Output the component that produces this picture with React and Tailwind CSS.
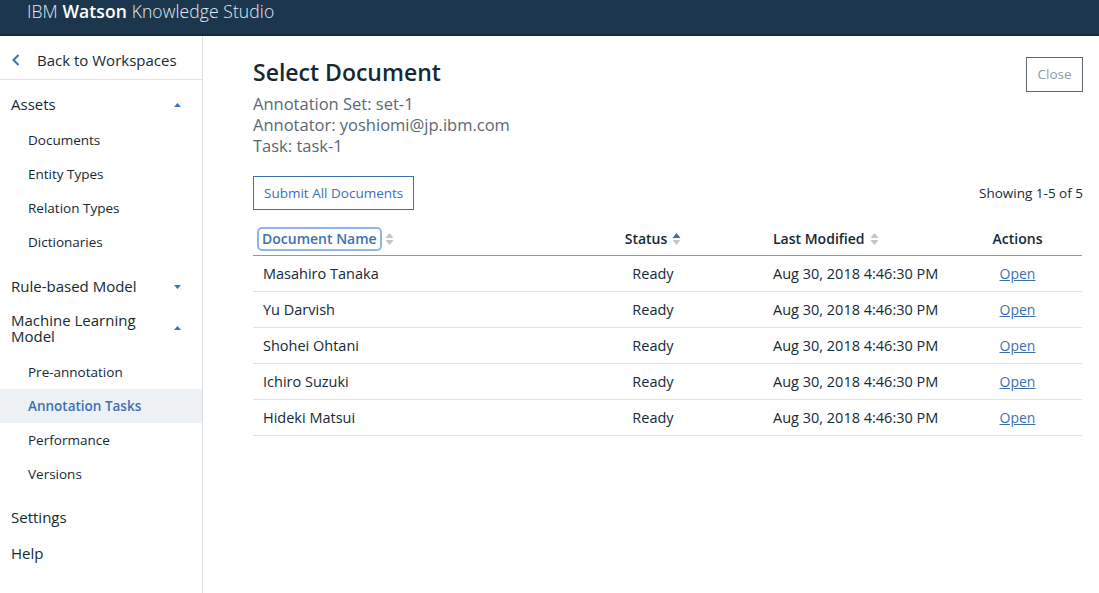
import React from 'react';

const rows = [
  { name: 'Masahiro Tanaka' },
  { name: 'Yu Darvish' },
  { name: 'Shohei Ohtani' },
  { name: 'Ichiro Suzuki' },
  { name: 'Hideki Matsui' },
];

function Caret({ up }) {
  return (
    <svg width="7" height="4" viewBox="0 0 7 4" className="fill-[#3d70b2]">
      {up ? <path d="M3.5 0 L7 4 L0 4 Z" /> : <path d="M0 0 L7 0 L3.5 4 Z" />}
    </svg>
  );
}

function SortIcon({ active }) {
  return (
    <svg width="9" height="14" viewBox="0 0 9 14" className="ml-[5px]">
      <path d="M4.5 1 L8.5 6 L0.5 6 Z" fill={active ? '#3d70b2' : '#c0c6cb'} />
      <path d="M0.5 8 L8.5 8 L4.5 13 Z" fill="#c0c6cb" />
    </svg>
  );
}

function NavGroup({ label, open, children }) {
  return (
    <div>
      <div className="flex items-center justify-between pl-[11px] pr-[21px] text-[15px] text-[#152935] leading-[17px]">
        <span>{label}</span>
        <Caret up={open} />
      </div>
      {children}
    </div>
  );
}

function SubItem({ label, active }) {
  return (
    <div
      className={
        'h-[34px] flex items-center pl-[28px] text-[13.5px] ' +
        (active ? 'bg-[#eef1f4] text-[#3d70b2] font-semibold' : 'text-[#152935]')
      }
    >
      {label}
    </div>
  );
}

export default function App() {
  return (
    <div className="w-[1099px] h-[593px] overflow-hidden bg-white flex flex-col font-['Open_Sans',sans-serif]">
      <header className="h-[36px] shrink-0 bg-[#1c374d] border-b-2 border-[#132a3c] flex items-center pl-[27px]">
        <span className="text-[17.5px] text-[#e6ecf1] font-light tracking-[0.1px] -mt-[12px]">
          IBM <span className="font-semibold text-white">Watson</span> Knowledge Studio
        </span>
      </header>

      <div className="flex flex-1 min-h-0">
        <aside className="w-[203px] shrink-0 border-r border-[#dfe3e6] flex flex-col">
          <div className="h-[44px] pt-[5px] flex items-center border-b border-[#dfe3e6] text-[15px] text-[#152935]">
            <svg width="8" height="12" viewBox="0 0 8 12" className="ml-[12px] mr-[17px]">
              <path d="M6.5 1 L1.5 6 L6.5 11" stroke="#3d70b2" strokeWidth="2" fill="none" />
            </svg>
            Back to Workspaces
          </div>

          <div className="pt-[16px]">
            <NavGroup label="Assets" open>
              <div className="pt-[10px] pb-[19px]">
                <SubItem label="Documents" />
                <SubItem label="Entity Types" />
                <SubItem label="Relation Types" />
                <SubItem label="Dictionaries" />
              </div>
            </NavGroup>
            <div className="pb-[17px]">
              <NavGroup label="Rule-based Model" open={false} />
            </div>
            <div className="flex items-center justify-between pl-[11px] pr-[21px] text-[15px] text-[#152935] leading-[16px]">
              <span>Machine Learning<br />Model</span>
              <Caret up />
            </div>
            <div className="pt-[11px] pb-[8px]">
              <SubItem label="Pre-annotation" />
              <SubItem label="Annotation Tasks" active />
              <SubItem label="Performance" />
              <SubItem label="Versions" />
            </div>
            <div className="pl-[11px] text-[15px] text-[#152935] h-[36px] flex items-center">Settings</div>
            <div className="pl-[11px] text-[15px] text-[#152935] h-[36px] flex items-center">Help</div>
          </div>
        </aside>

        <main className="flex-1 pl-[50px] pr-[16px] pt-[21px]">
          <div className="flex justify-between items-start">
            <div>
              <h1 className="text-[23px] font-semibold text-[#152935] leading-[30px]">Select Document</h1>
              <div className="mt-[6px] text-[16.5px] text-[#5a6872] leading-[21px]">
                <div>Annotation Set: set-1</div>
                <div>Annotator: yoshiomi@jp.ibm.com</div>
                <div>Task: task-1</div>
              </div>
            </div>
            <button className="w-[57px] h-[35px] border border-[#5a6872] text-[13.5px] text-[#8c9ba5]">
              Close
            </button>
          </div>

          <div className="flex justify-between items-center mt-[20px]">
            <button className="h-[34px] px-[10px] border border-[#3d70b2] text-[13.5px] text-[#3d70b2]">
              Submit All Documents
            </button>
            <span className="text-[13.5px] text-[#152935]">Showing 1-5 of 5</span>
          </div>

          <div className="mt-[12px] w-[829px]">
            <div className="grid grid-cols-[350px_100px_250px_1fr] h-[34px] items-center border-b border-[#8c9ba5] text-[14px] font-semibold text-[#152935]">
              <div className="pl-[6px] flex items-center">
                <span className="px-[3px] leading-[20px] text-[#3d70b2] rounded-[3px] ring-2 ring-[#8fb6ec]">Document Name</span>
                <SortIcon />
              </div>
              <div className="flex items-center justify-center">
                Status
                <SortIcon active />
              </div>
              <div className="pl-[70px] flex items-center">
                Last Modified
                <SortIcon />
              </div>
              <div className="text-center">Actions</div>
            </div>
            {rows.map((r) => (
              <div
                key={r.name}
                className="grid grid-cols-[350px_100px_250px_1fr] h-[36px] items-center border-b border-[#dfe3e6] text-[14.5px] text-[#152935]"
              >
                <div className="pl-[10px]">{r.name}</div>
                <div className="text-center">Ready</div>
                <div className="pl-[70px]">Aug 30, 2018 4:46:30 PM</div>
                <div className="text-center">
                  <a href="#" className="text-[#3d70b2] underline text-[14px]">Open</a>
                </div>
              </div>
            ))}
          </div>
        </main>
      </div>
    </div>
  );
}
